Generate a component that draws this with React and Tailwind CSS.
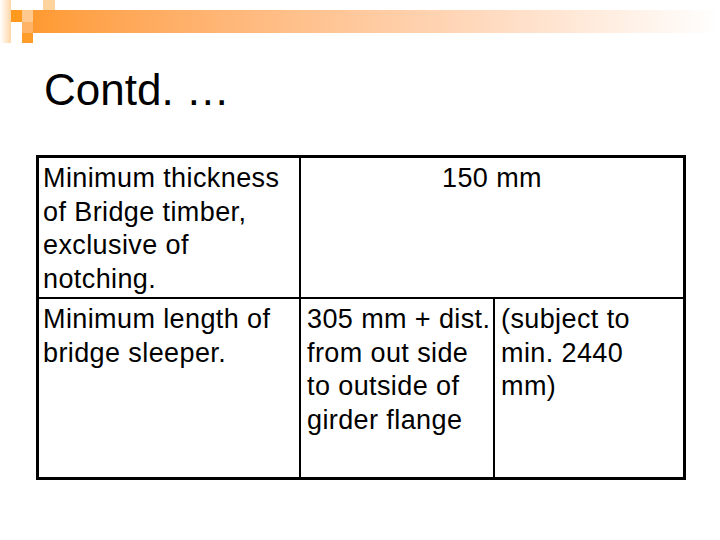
export default function App() {
  return (
    <div className="relative w-[720px] h-[540px] bg-white overflow-hidden" style={{ fontFamily: '"Liberation Sans", Arial, sans-serif' }}>
      {/* decoration */}
      <div className="absolute left-0 top-0 w-[720px] h-[45px]">
        <div className="absolute left-0 top-0 w-[11px] h-[43px] bg-gradient-to-r from-white to-[#ffd6a6]" />
        <div className="absolute left-[33px] top-[10px] w-[687px] h-[23px] bg-gradient-to-r from-[#ff9a30] via-[#ffd9bd] via-65% to-white" />
        <div className="absolute left-[43px] top-0 w-[12px] h-[10px] bg-[#ffd39e]" />
        <div className="absolute left-[11px] top-[10px] w-[11px] h-[12px] bg-[#ff9a1f]" />
        <div className="absolute left-[22px] top-[10px] w-[11px] h-[12px] bg-[#ffc98f]" />
        <div className="absolute left-[22px] top-[22px] w-[11px] h-[11px] bg-[#ffb366]" />
        <div className="absolute left-[22px] top-[33px] w-[11px] h-[10px] bg-[#ff9d2a]" />
      </div>

      <div className="pt-[65px] pl-[44px] text-[44px] leading-[50px] text-black">Contd. …</div>

      <div className="ml-[36px] mt-[40px] w-[650px] h-[325px] border-[3px] border-black grid grid-cols-[262px_194px_188px] grid-rows-[141px_178px] text-[27px] leading-[33.6px] tracking-[0.4px] text-black">
        <div className="border-r-2 border-b-2 border-black pl-[4px] pt-[4px]">
          Minimum thickness of Bridge timber, exclusive of notching.
        </div>
        <div className="col-span-2 border-b-2 border-black pt-[4px] text-center">150 mm</div>
        <div className="border-r-2 border-black pl-[4px] pt-[4px]">
          Minimum length of bridge sleeper.
        </div>
        <div className="border-r-2 border-black pl-[6px] pt-[4px]">
          305 mm + dist. from out side to outside of girder flange
        </div>
        <div className="pl-[6px] pt-[4px]">
          (subject to<br />min. 2440<br />mm)
        </div>
      </div>
    </div>
  );
}
